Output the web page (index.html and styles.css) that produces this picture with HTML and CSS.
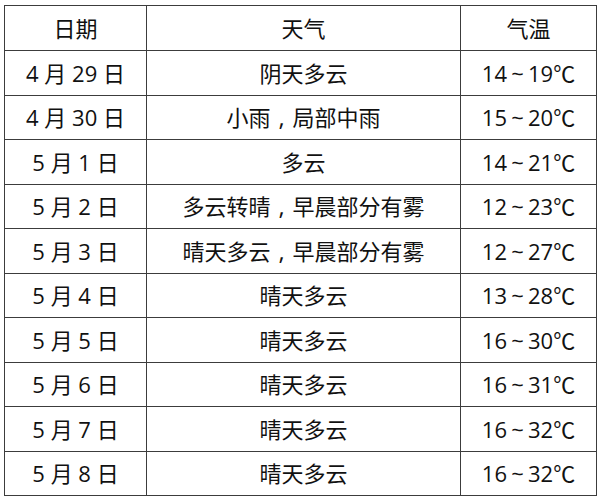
FILE: index.html
```html
<!DOCTYPE html>
<html lang="zh-CN">
<head>
<meta charset="utf-8">
<title>天气预报</title>
<link rel="stylesheet" href="styles.css">
</head>
<body>
<div class="wrap">
<table class="weather">
  <colgroup>
    <col class="c-date">
    <col class="c-wx">
    <col class="c-temp">
  </colgroup>
  <thead>
    <tr class="head"><th>日期</th><th>天气</th><th>气温</th></tr>
  </thead>
  <tbody>
    <tr><td>4 月 29 日</td><td>阴天多云</td><td>14<span class="tl">~</span>19℃</td></tr>
    <tr><td>4 月 30 日</td><td>小雨<span class="cm">,</span>局部中雨</td><td>15<span class="tl">~</span>20℃</td></tr>
    <tr><td>5 月 1 日</td><td>多云</td><td>14<span class="tl">~</span>21℃</td></tr>
    <tr><td>5 月 2 日</td><td>多云转晴<span class="cm">,</span>早晨部分有雾</td><td>12<span class="tl">~</span>23℃</td></tr>
    <tr><td>5 月 3 日</td><td>晴天多云<span class="cm">,</span>早晨部分有雾</td><td>12<span class="tl">~</span>27℃</td></tr>
    <tr><td>5 月 4 日</td><td>晴天多云</td><td>13<span class="tl">~</span>28℃</td></tr>
    <tr><td>5 月 5 日</td><td>晴天多云</td><td>16<span class="tl">~</span>30℃</td></tr>
    <tr><td>5 月 6 日</td><td>晴天多云</td><td>16<span class="tl">~</span>31℃</td></tr>
    <tr><td>5 月 7 日</td><td>晴天多云</td><td>16<span class="tl">~</span>32℃</td></tr>
    <tr><td>5 月 8 日</td><td>晴天多云</td><td>16<span class="tl">~</span>32℃</td></tr>
  </tbody>
</table>
</div>
</body>
</html>
```

FILE: styles.css
```css
html, body {
  margin: 0;
  padding: 0;
  background: #ffffff;
}
.wrap {
  padding: 5px 0 0 4px;
}
.weather {
  border-collapse: collapse;
  table-layout: fixed;
  width: 592px;
  font-family: "Open Sans", "Noto Sans CJK SC", sans-serif;
  font-size: 22px;
  color: #111111;
}
.c-date { width: 142px; }
.c-wx { width: 314px; }
.c-temp { width: 136px; }
.weather th,
.weather td {
  border: 1px solid #3c3c3c;
  padding: 0;
  text-align: center;
  vertical-align: middle;
  font-weight: normal;
  line-height: 1;
  white-space: nowrap;
}
.weather .head th {
  height: 44px;
}
.weather tbody td {
  height: 43.5px;
}
.cm {
  display: inline-block;
  width: 22px;
  text-align: center;
  font-size: 24px;
  line-height: 1;
}
.tl {
  display: inline-block;
  width: 21px;
  text-align: center;
}
```
